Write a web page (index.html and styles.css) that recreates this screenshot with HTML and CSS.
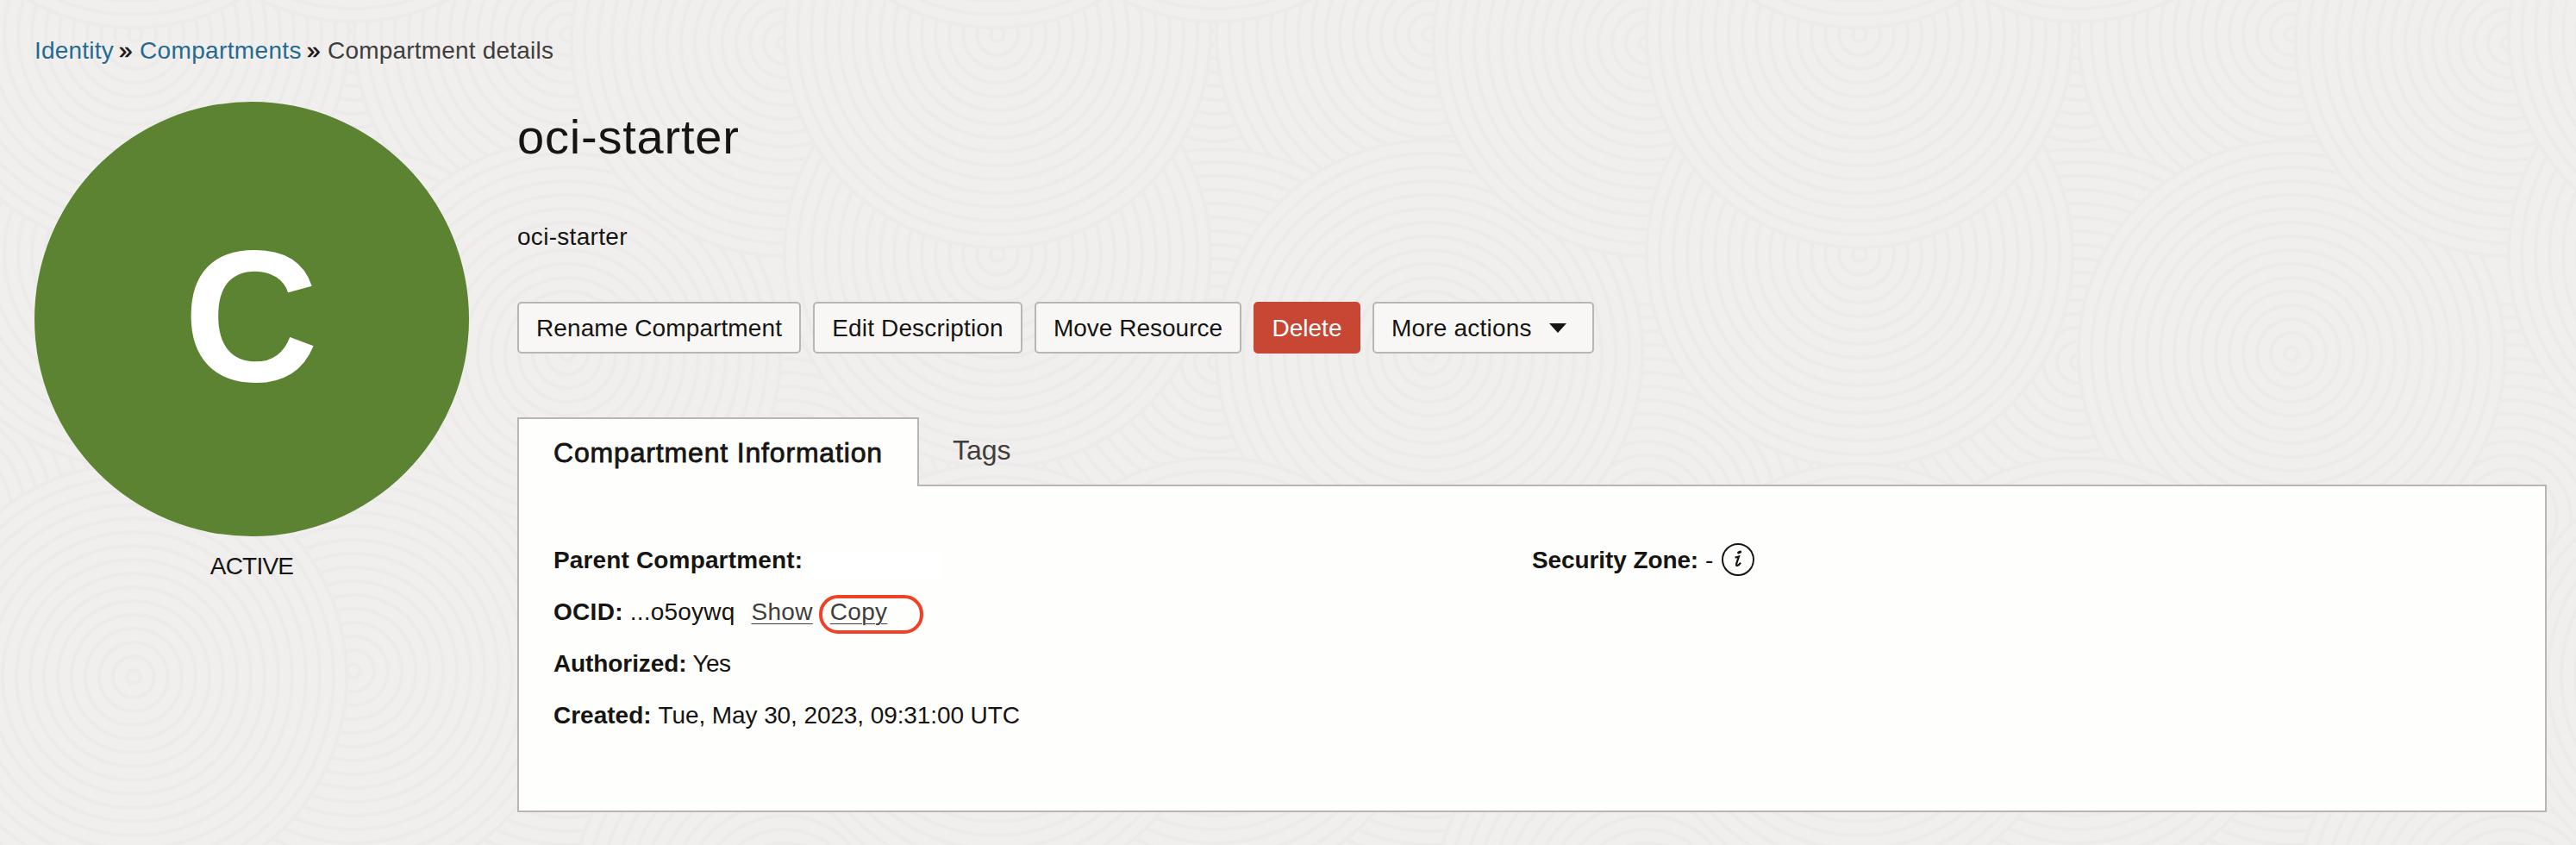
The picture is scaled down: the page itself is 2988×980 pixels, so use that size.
FILE: index.html
```html
<!DOCTYPE html>
<html lang="en">
<head>
<meta charset="utf-8">
<title>Compartment details</title>
<link rel="stylesheet" href="styles.css">
</head>
<body>
<svg class="texture" width="2988" height="980" aria-hidden="true">
  <defs>
    <g id="swirl">
      <circle class="base" r="248"/>
      <g class="rings">
        <circle r="8"/><circle r="24"/><circle r="40"/><circle r="56"/><circle r="72"/><circle r="88"/><circle r="104"/><circle r="120"/><circle r="136"/><circle r="152"/><circle r="168"/><circle r="184"/><circle r="200"/><circle r="216"/><circle r="232"/><circle r="247"/>
      </g>
    </g>
    <pattern id="tile" width="1000" height="1000" patternUnits="userSpaceOnUse">
      <rect class="base" width="1000" height="1000"/>
      <use href="#swirl" x="410" y="1060"/><use href="#swirl" x="410" y="60"/>
      <use href="#swirl" x="658" y="40"/><use href="#swirl" x="658" y="1040"/>
      <use href="#swirl" x="910" y="600"/><use href="#swirl" x="-90" y="600"/>
      <use href="#swirl" x="658" y="780"/>
      <use href="#swirl" x="410" y="420"/>
      <use href="#swirl" x="658" y="410"/>
      <use href="#swirl" x="910" y="50"/><use href="#swirl" x="-90" y="50"/>
      <use href="#swirl" x="910" y="1050"/><use href="#swirl" x="-90" y="1050"/>
      <use href="#swirl" x="157" y="295"/><use href="#swirl" x="1157" y="295"/>
      <use href="#swirl" x="157" y="40"/><use href="#swirl" x="1157" y="40"/>
      <use href="#swirl" x="410" y="778"/><use href="#swirl" x="410" y="-222"/>
      <use href="#swirl" x="155" y="785"/><use href="#swirl" x="1155" y="785"/>
      <use href="#swirl" x="155" y="-215"/><use href="#swirl" x="1155" y="-215"/>
    </pattern>
  </defs>
  <rect width="2988" height="980" fill="url(#tile)"/>
</svg>
<div class="page">
  <nav class="breadcrumb">
    <a class="crumb-link identity">Identity</a><span class="sep">»</span><a class="crumb-link compartments">Compartments</a><span class="sep">»</span><span class="crumb-current">Compartment details</span>
  </nav>
  <div class="layout">
    <aside class="status">
      <div class="badge">C</div>
      <div class="state">ACTIVE</div>
    </aside>
    <main class="details">
      <h1 class="title">oci-starter</h1>
      <p class="description">oci-starter</p>
      <div class="actions">
        <button class="btn rename">Rename Compartment</button>
        <button class="btn edit">Edit Description</button>
        <button class="btn move">Move Resource</button>
        <button class="btn delete">Delete</button>
        <button class="btn more">More actions<svg class="caret" width="20" height="11" viewBox="0 0 20 11"><path d="M0 0H20L10 11Z" fill="#161513"/></svg></button>
      </div>
      <div class="tabs">
        <div class="tab active">Compartment Information</div>
        <div class="tab">Tags</div>
      </div>
      <section class="panel">
        <div class="column">
          <div class="row"><b class="parent">Parent Compartment:</b><span class="blank"></span></div>
          <div class="row"><b class="ocid">OCID:</b><span class="value id">...o5oywq</span><a class="link show">Show</a><span class="ring"><a class="link">Copy</a></span></div>
          <div class="row"><b class="authorized">Authorized:</b><span class="value yes">Yes</span></div>
          <div class="row"><b>Created:</b><span class="value date">Tue, May 30, 2023, 09:31:00 UTC</span></div>
        </div>
        <div class="column">
          <div class="row"><b class="zone">Security Zone:</b><span class="value">-</span><svg class="info" width="40" height="40" viewBox="0 0 40 40"><circle cx="20" cy="20" r="18" fill="none" stroke="#161513" stroke-width="2"/><path d="M20.6 11.9L22.6 11.1" fill="none" stroke="#161513" stroke-width="3" stroke-linecap="round"/><path d="M16.6 17.6Q19.4 17.2 20.9 16.6L18.2 24.6Q17.6 27.2 19.2 27Q21 26.6 23 23.6" fill="none" stroke="#161513" stroke-width="2.2"/></svg></div>
        </div>
      </section>
    </main>
  </div>
</div>
</body>
</html>
```
FILE: styles.css
```css
* { box-sizing: border-box; }
body {
  margin: 0;
  width: 2988px;
  height: 980px;
  overflow: hidden;
  background: #f0efed;
  color: #161513;
  font: 28px/40px "Liberation Sans", Arial, sans-serif;
  white-space: nowrap;
}
.texture { position: absolute; left: 0; top: 0; z-index: -1; }
.base { fill: #f0efed; }
.rings { fill: none; stroke: #ecebe9; stroke-width: 4; }
.page { padding: 39px 34px 0 40px; }
.breadcrumb { display: flex; height: 40px; }
.crumb-link { color: #266a8f; }
.identity { width: 98px; letter-spacing: .2px; }
.sep { width: 24px; -webkit-text-stroke: .6px #161513; }
.compartments { width: 194px; letter-spacing: .35px; }
.crumb-current { color: #403e3c; letter-spacing: .2px; }
.layout { display: flex; gap: 56px; margin-top: 39px; }
.status { flex: none; width: 504px; }
.badge {
  display: flex;
  align-items: center;
  justify-content: center;
  height: 504px;
  padding: 0 2px 7px 0;
  border-radius: 50%;
  background: #5b8332;
  color: #fff;
  font-weight: bold;
  font-size: 217px;
}
.state { margin-top: 15px; text-align: center; letter-spacing: -.8px; }
.details { flex: 1; min-width: 0; }
.title { margin: 9px 0 0; font-size: 56px; font-weight: normal; line-height: 64px; letter-spacing: .8px; }
.description { margin: 64px 0 0; letter-spacing: .3px; }
.actions { display: flex; gap: 14px; margin-top: 55px; }
.btn {
  display: flex;
  align-items: center;
  justify-content: center;
  height: 60px;
  padding: 1px 0 0;
  border: 2px solid #bbb5af;
  border-radius: 5px;
  background: #f8f7f5;
  color: #161513;
  font: inherit;
}
.rename { width: 329px; letter-spacing: .1px; }
.edit { width: 243px; letter-spacing: .15px; }
.move { width: 240px; }
.delete { width: 124px; border-color: #c74634; background: #c74634; color: #fff; }
.more { width: 257px; justify-content: flex-start; padding-left: 20px; letter-spacing: .2px; }
.caret { margin-left: 20px; }
.tabs { display: flex; height: 80px; margin-top: 74px; font-size: 32px; }
.tab { padding: 18px 39px; color: #403e3c; line-height: 40px; }
.tab.active {
  z-index: 1;
  width: 466px;
  padding: 19px 40px 0;
  border: 2px solid #bbb5af;
  border-bottom: 0;
  background: #fefefd;
  color: #161513;
  letter-spacing: .83px;
  -webkit-text-stroke: .8px #161513;
}
.panel {
  display: flex;
  height: 380px;
  margin-top: -2px;
  padding: 56px 40px 0;
  border: 2px solid #bbb5af;
  background: #fefefd;
}
.column { flex: none; width: 1135px; }
.column + .column { width: auto; }
.row { display: flex; align-items: center; height: 60px; }
.value { margin-left: 8px; }
.id { letter-spacing: .2px; }
.yes { margin-left: 7px; letter-spacing: -.5px; }
.date { letter-spacing: -.1px; }
.parent { letter-spacing: .15px; }
.ocid { letter-spacing: .3px; }
.authorized { letter-spacing: -.1px; }
.zone { letter-spacing: -.1px; }
.blank { width: 155px; height: 34px; margin: 10px 0 0 7px; background: #fff; }
.link {
  color: #403e3c;
  letter-spacing: .3px;
  text-decoration: underline;
  text-decoration-thickness: 1px;
  text-underline-offset: 4px;
}
.show { margin-left: 19px; }
.ring {
  width: 121px;
  height: 45px;
  margin: 5px 0 0 7px;
  padding-left: 9px;
  border: 4px solid #ee4128;
  border-radius: 22px;
  line-height: 32px;
}
.info { margin: -2px 0 0 9px; }
```
